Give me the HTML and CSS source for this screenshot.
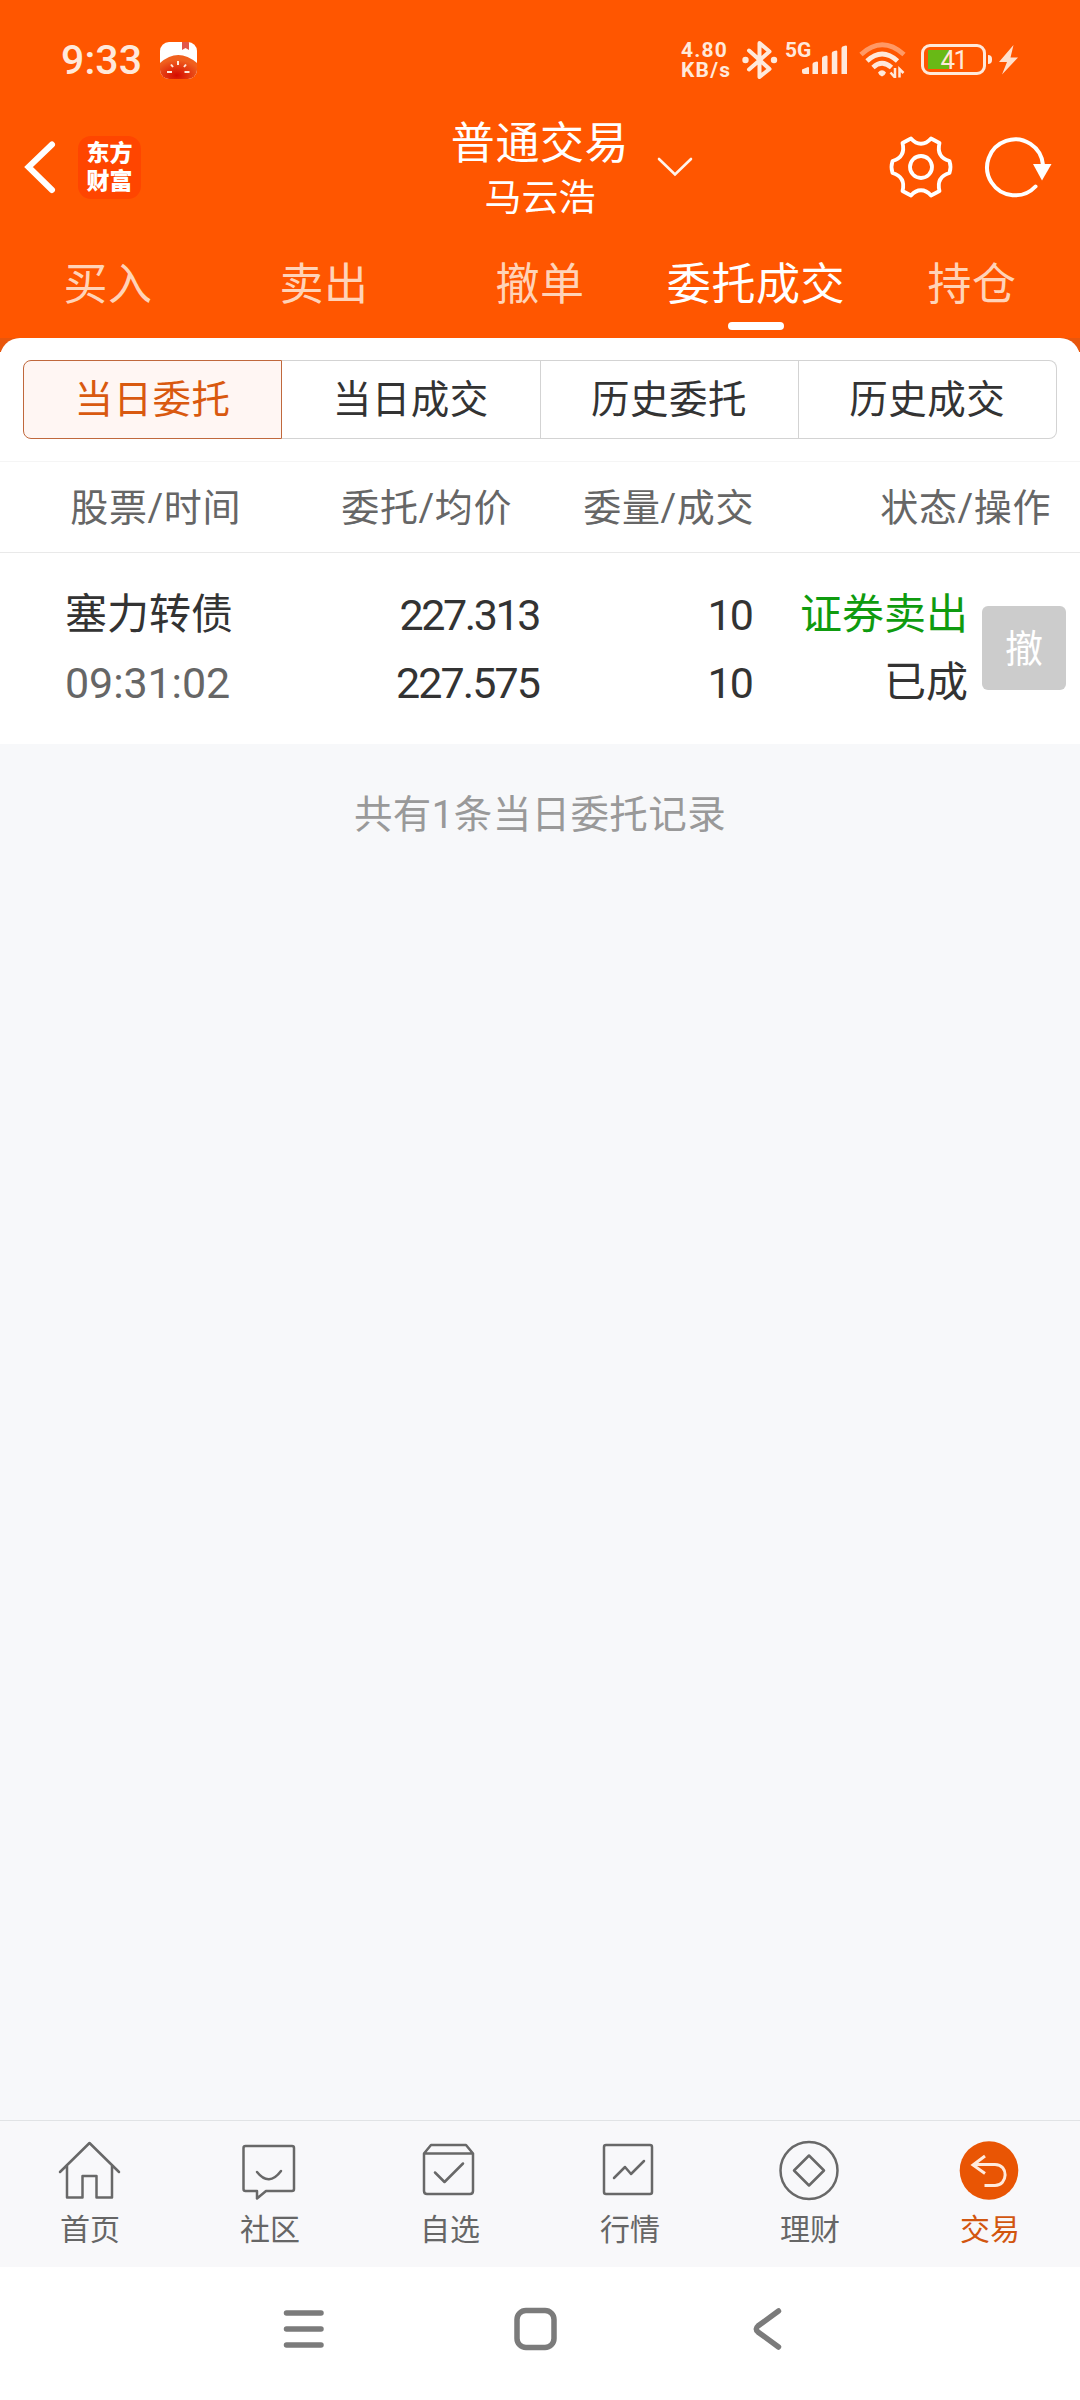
FILE: index.html
```
<!DOCTYPE html>
<html lang="zh-CN">
<head>
<meta charset="utf-8">
<meta name="viewport" content="width=device-width, initial-scale=1.0">
<title>普通交易</title>
<link rel="stylesheet" href="styles.css">
</head>
<body>
<div class="header">
  <div class="status">
    <span class="clock">9:33</span>
    <svg class="tomato" width="38" height="38" viewBox="0 0 38 38">
      <defs>
        <clipPath id="round"><rect width="37" height="37" rx="9"/></clipPath>
        <radialGradient id="red" cx=".45" cy=".85" r=".65"><stop offset="0" stop-color="#d50b00"/><stop offset="1" stop-color="#f0601e"/></radialGradient>
      </defs>
      <g clip-path="url(#round)">
        <rect width="37" height="37" fill="#fff"/>
        <path d="M22 0h7v8l-3.500-2-3.500 2z" fill="#e2574a"/>
        <path d="M0 21Q18 5 37 21V37H0z" fill="url(#red)"/>
      </g>
      <path d="M18 19v4M11 22.500l2 2.500M26 22.500l-2 2.500M7 30h5M24.500 30h5" stroke="#ffeadb" stroke-width="2"/>
    </svg>
    <div class="speed">4.80<br>KB/s</div>
    <svg class="bluetooth" width="38" height="40" viewBox="0 0 38 40">
      <path d="M8 10.500L28.500 29 18.500 37V3L28.500 11.500 8 29.500" fill="none" stroke="#ffe9db" stroke-width="4" stroke-linejoin="round" stroke-linecap="round"/>
      <circle cx="4.500" cy="20" r="3.200" fill="#ffe9db"/><circle cx="33" cy="20" r="3.200" fill="#ffe9db"/>
    </svg>
    <div class="net">5G</div>
    <svg class="bars" width="46" height="30" viewBox="0 0 46 30" fill="#ffe9db">
      <path d="M0 24.500l6-2.500q1 0 1 1v6H2q-2 0-2-2z"/>
      <path d="M10.500 19q0-1.500 2.500-2 3-1 3 .5V29h-5.500zM20 13q0-1.500 2.500-2 3-1 3 .5V29H20zM29.800 8q0-1.500 2.500-2 3-1 3 .5V29h-5.500zM39.500 3q0-1.500 2.500-2 3-1 3 .5V29h-5.500z"/>
    </svg>
    <svg class="wifi" width="48" height="36" viewBox="0 0 48 36">
      <g fill="none" stroke="#ffe9db" stroke-width="4.800">
        <path d="M2 12.500Q23 -7 45 12.500" stroke="#ff9965"/>
        <path d="M8 19Q23 5 38.500 19"/><path d="M14 25.500Q23 17 32.500 25.500"/>
      </g>
      <path d="M19 30.500q4-4.500 8 0l-1.500 2.500-2.500 1.500-2.500-1.500z" fill="#ffe9db"/>
      <path d="M36 26v9.500l-4.500-5M40.500 35.500V27l4 4" fill="none" stroke="#ffe9db" stroke-width="2.500"/>
    </svg>
    <div class="battery"><span>41</span></div>
    <div class="nub"></div>
    <svg width="22" height="32" viewBox="0 0 22 32"><path d="M15.500 1L1 18h8L4 30.500 20 13.500h-7.500z" fill="#ffe0cd"/></svg>
  </div>

  <div class="titlebar">
    <svg class="back" width="34" height="56" viewBox="0 0 34 56"><path d="M28 5.500L4.500 28l23.500 23" fill="none" stroke="#fff" stroke-width="6" stroke-linecap="round"/></svg>
    <div class="logo">东方<br>财富</div>
    <div class="title">
      <div class="title-main">普通交易</div>
      <div class="title-name">马云浩</div>
    </div>
    <svg class="down" width="36" height="22" viewBox="0 0 36 22"><path d="M2 3l16 15.500L34 3" fill="none" stroke="#fff4ec" stroke-width="2.600" stroke-linecap="round"/></svg>
    <svg class="gear" width="66" height="66" viewBox="0 0 66 66" fill="none" stroke="#fff" stroke-width="3.800" stroke-linejoin="round">
      <path d="M23 4.500L14.500 9C17 19 13 24.500 4.500 27Q2.500 33 4.500 39C13 41.500 17 47 14.500 57L23 61.500C29 54.500 37 54.500 43 61.500L51.500 57C49 47 53 41.500 61.500 39Q63.500 33 61.500 27C53 24.500 49 19 51.500 9L43 4.500C37 11.500 29 11.500 23 4.500Z"/>
      <circle cx="33" cy="33" r="11"/>
    </svg>
    <svg class="reload" width="72" height="66" viewBox="0 0 72 66">
      <path d="M53.500 52.500A28 28 0 1 1 61 31" fill="none" stroke="#fff" stroke-width="4" stroke-linecap="round"/>
      <path d="M51 30h18.500l-9.500 16.500z" fill="#fff"/>
    </svg>
  </div>

  <div class="tabs">
    <div class="tab">买入</div>
    <div class="tab">卖出</div>
    <div class="tab">撤单</div>
    <div class="tab on">委托成交</div>
    <div class="tab">持仓</div>
  </div>
</div>

<div class="corner"><div class="corner-in"></div></div>
<div class="sheet">
  <div class="segments">
    <div class="seg active">当日委托</div>
    <div class="seg">当日成交</div>
    <div class="seg">历史委托</div>
    <div class="seg">历史成交</div>
  </div>
  <div class="thead">
    <div>股票/时间</div>
    <div>委托/均价</div>
    <div>委量/成交</div>
    <div>状态/操作</div>
  </div>
  <div class="row">
    <div class="cell name">塞力转债<br><span class="time">09:31:02</span></div>
    <div class="cell num"><span class="order">227.313</span><br>227.575</div>
    <div class="cell num">10<br>10</div>
    <div class="cell"><span class="sell">证券卖出</span><br>已成</div>
    <div class="cancel">撤</div>
  </div>
</div>

<div class="content">共有1条当日委托记录</div>

<div class="tabbar">
  <div class="item">
    <svg width="64" height="62" viewBox="0 0 64 62"><path d="M3 33L32.500 4 62 33M10 27v31.500h15.500V37H39.500v21.500H55V27"/></svg>
    首页
  </div>
  <div class="item">
    <svg width="64" height="62" viewBox="0 0 64 62"><path d="M8.500 7H55q2 0 2 2v41q0 2-2 2H29l-9 7.500V52H8.500q-2 0-2-2V9q0-2 2-2z"/><path d="M20 33q12 15 24-1"/></svg>
    社区
  </div>
  <div class="item">
    <svg width="64" height="62" viewBox="0 0 64 62"><path d="M7 14.500v37.500q0 3 3 3h43q3 0 3-3V14.500L49 6H14L7 14.500H56M18 33.500l9.500 9.500 18.500-18.500"/></svg>
    自选
  </div>
  <div class="item">
    <svg width="64" height="62" viewBox="0 0 64 62"><rect x="7" y="6" width="48" height="49" rx="2"/><path d="M17 39l11-11 6 7 13-13"/></svg>
    行情
  </div>
  <div class="item">
    <svg width="64" height="62" viewBox="0 0 64 62"><circle cx="32" cy="31.500" r="28.500"/><path d="M32 16.500l15 15-15 15-15-15z"/></svg>
    理财
  </div>
  <div class="item current">
    <svg width="64" height="62" viewBox="0 0 64 62"><circle class="disc" cx="32" cy="31.500" r="29.300"/><path class="arrow" d="M28 17L16 26 28 34.500M16 25.500H38c14 0 13 21 0 21H27.500"/></svg>
    交易
  </div>
</div>

<div class="sysnav">
  <svg width="48" height="48" viewBox="0 0 48 48"><path d="M7.500 8H42M7.500 24H42M7.500 40H42"/></svg>
  <svg width="48" height="48" viewBox="0 0 48 48"><rect x="6" y="5.500" width="37" height="37" rx="9"/></svg>
  <svg width="48" height="48" viewBox="0 0 48 48"><path d="M35.500 6L15 21q-3.500 3 0 6L35.500 42"/></svg>
</div>
</body>
</html>
```

FILE: styles.css
```
body {
  margin: 0;
  width: 1080px;
  height: 2400px;
  display: flex;
  flex-direction: column;
  overflow: hidden;
  background-color: #fff;
  color: #333;
  font-family: Roboto, "Noto Sans CJK SC", sans-serif;
}
svg {
  display: block;
  flex: none;
}
.header {
  height: 338px;
  background-color: #ff5600;
  color: #fff;
}

/* status bar */
.status {
  display: flex;
  align-items: center;
  height: 119px;
  box-sizing: border-box;
  padding-left: 61px;
  color: #ffe9db;
}
.clock {
  width: 99px;
  font-size: 41px;
  font-weight: 500;
  letter-spacing: 0.1px;
}
.tomato {
  margin-top: 3px;
}
.speed {
  width: 60px;
  margin-left: 483px;
  font-size: 21px;
  line-height: 20px;
  font-weight: 700;
  letter-spacing: 1.2px;
}
.net {
  margin-left: 6px;
  margin-top: -20px;
  width: 17px;
  font-size: 21px;
  font-weight: 700;
  line-height: 20px;
}
.bars {
  margin-top: 1px;
}
.wifi {
  margin-left: 11px;
}
.battery {
  flex: none;
  width: 65px;
  height: 31px;
  margin-left: 14px;
  box-sizing: border-box;
  border: 3px solid #ffe9db;
  border-radius: 9px;
  background: linear-gradient(#68b916, #68b916) 4px 3px / 21px 19px no-repeat;
  text-align: center;
  font-size: 26px;
  line-height: 26px;
  letter-spacing: -1.5px;
}
.nub {
  width: 4px;
  height: 9px;
  margin: 0 6px 0 2px;
  border-radius: 0 4px 4px 0;
  background-color: #ffe9db;
}

/* title */
.titlebar {
  display: flex;
  align-items: center;
  height: 96px;
}
.back {
  margin-left: 24px;
}
.logo {
  width: 63px;
  height: 63px;
  margin-left: 20px;
  box-sizing: border-box;
  padding-top: 4px;
  border-radius: 13px;
  background-color: #ff4500;
  text-align: center;
  font-weight: 900;
  font-size: 23px;
  line-height: 28px;
}
.title {
  width: 300px;
  margin-left: 249px;
  padding-top: 3px;
  text-align: center;
}
.title-main {
  font-size: 44px;
  line-height: 60px;
  letter-spacing: 0.6px;
}
.title-name {
  font-size: 37px;
  line-height: 50px;
}
.down {
  margin-left: -33px;
}
.gear {
  margin-left: 195px;
}
.reload {
  margin-left: 28px;
}
.tabs {
  display: flex;
  height: 123px;
}
.tab {
  width: 216px;
  padding-top: 44px;
  text-align: center;
  font-size: 44px;
  line-height: 52px;
  letter-spacing: 0.6px;
  color: #ffd3b8;
}
.tab.on {
  color: #fff;
}
.tab.on::after {
  content: "";
  display: block;
  width: 56px;
  height: 8px;
  margin: 11px auto 0;
  border-radius: 4px;
  background-color: #fff;
}

/* rounded top edge of the white sheet */
.corner {
  height: 14px;
  overflow: hidden;
  background-color: #e8560c;
}
.corner-in {
  height: 40px;
  border-radius: 22px;
  background-color: #fff;
}
.sheet {
  height: 392px;
  background-color: #fff;
}
.segments {
  display: flex;
  margin: 8px 23px 0;
  height: 79px;
}
.seg {
  flex: 1;
  box-sizing: border-box;
  border: 1px solid #d3d3d3;
  border-left: 0;
  text-align: center;
  font-size: 38.5px;
  line-height: 78px;
  letter-spacing: 0.5px;
}
.seg:last-child {
  border-radius: 0 8px 8px 0;
}
.seg.active {
  border: 1px solid #c0683c;
  border-radius: 8px 0 0 8px;
  background-color: #fff6f3;
  color: #d9590f;
}
.thead {
  display: grid;
  grid-template-columns: 241px 271px 242px 297px;
  height: 90px;
  margin-top: 22px;
  border-top: 1px solid #f5f5f5;
  border-bottom: 1px solid #e9e9e9;
  text-align: right;
  font-size: 38px;
  line-height: 92px;
  letter-spacing: 0.6px;
  color: #666;
}
.row {
  display: grid;
  grid-template-columns: 176px 298px 213px 216px 84px;
  padding: 28px 14px 0 65px;
  text-align: right;
  font-size: 42px;
  line-height: 68px;
}
.name {
  text-align: left;
}
.time {
  color: #666;
  font-size: 43px;
  letter-spacing: -0.1px;
}
.num {
  font-size: 43px;
  letter-spacing: -1.9px;
}
.order {
  letter-spacing: -2.4px;
}
.sell {
  color: #0f9b0f;
}
.cancel {
  width: 84px;
  height: 84px;
  margin: 25px 0 0 14px;
  border-radius: 6px;
  background-color: #ccc;
  color: #fff;
  text-align: center;
  font-size: 38px;
  line-height: 87px;
}
.content {
  flex: 1;
  padding-top: 44px;
  background-color: #f7f8fa;
  text-align: center;
  font-size: 38.5px;
  line-height: 54px;
  letter-spacing: 0.4px;
  color: #999;
}

/* bottom navigation */
.tabbar {
  display: flex;
  height: 146px;
  border-top: 1px solid #e1e3e5;
  background-color: #f8f8fa;
}
.item {
  display: flex;
  flex-direction: column;
  align-items: center;
  width: 180px;
  padding-top: 18px;
  box-sizing: border-box;
  font-size: 30px;
  line-height: 58px;
  color: #666;
}
.item svg {
  margin-left: -2px;
  fill: none;
  stroke: #686868;
  stroke-width: 2.5;
  stroke-linejoin: round;
  stroke-linecap: round;
}
.item.current {
  color: #d2560f;
}
.item .disc {
  fill: #e95504;
  stroke: none;
}
.item .arrow {
  stroke: #ffeadd;
  stroke-width: 3;
  stroke-linecap: butt;
  stroke-linejoin: miter;
}
.sysnav {
  display: flex;
  gap: 184px;
  height: 133px;
  padding-left: 279px;
  box-sizing: border-box;
  padding-top: 38px;
}
.sysnav svg {
  fill: none;
  stroke: #7b7b7b;
  stroke-width: 5.5;
  stroke-linecap: round;
}
```
